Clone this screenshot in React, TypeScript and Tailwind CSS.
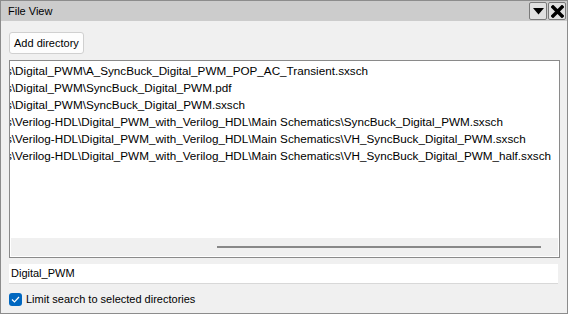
import React from "react";

const rows = [
  "s\\Digital_PWM\\A_SyncBuck_Digital_PWM_POP_AC_Transient.sxsch",
  "s\\Digital_PWM\\SyncBuck_Digital_PWM.pdf",
  "s\\Digital_PWM\\SyncBuck_Digital_PWM.sxsch",
  "s\\Verilog-HDL\\Digital_PWM_with_Verilog_HDL\\Main Schematics\\SyncBuck_Digital_PWM.sxsch",
  "s\\Verilog-HDL\\Digital_PWM_with_Verilog_HDL\\Main Schematics\\VH_SyncBuck_Digital_PWM.sxsch",
  "s\\Verilog-HDL\\Digital_PWM_with_Verilog_HDL\\Main Schematics\\VH_SyncBuck_Digital_PWM_half.sxsch",
];

export default function App() {
  return (
    <div
      className="w-[568px] h-[314px] bg-[#f0f0f0] border border-[#8c8c8c] flex flex-col text-[11px] text-black overflow-hidden"
      style={{ fontFamily: '"Liberation Sans", Arial, sans-serif' }}
    >
      {/* Title bar */}
      <div className="h-[20px] bg-[#cccccc] flex items-center pl-[7px] pr-[1px] shrink-0">
        <span className="flex-1 leading-none text-[11px]">File View</span>
        <div className="flex gap-[1px]">
          <div className="w-[18px] h-[18px] border border-[#7a7a7a] rounded-[2px] bg-[#e0e0e0] flex items-center justify-center">
            <svg width="11" height="7" viewBox="0 0 11 7">
              <polygon points="0,0 11,0 5.5,6.5" fill="#000" />
            </svg>
          </div>
          <div className="w-[18px] h-[18px] border border-[#7a7a7a] rounded-[2px] bg-[#e0e0e0] flex items-center justify-center">
            <svg width="13" height="13" viewBox="0 0 13 13">
              <path d="M2 2 L11 11 M11 2 L2 11" stroke="#000" strokeWidth="3.4" strokeLinecap="square" />
            </svg>
          </div>
        </div>
      </div>

      {/* Body */}
      <div className="flex-1 flex flex-col px-[8px] pt-[11px]">
        <div className="flex">
          <button className="h-[22px] px-[4px] border border-[#d0d0d0] rounded-[3px] bg-[#fdfdfd] text-[11px] leading-none">
            Add directory
          </button>
        </div>

        <div className="mt-[6px] w-[551px] h-[198px] border border-[#8a8a8a] bg-white flex flex-col overflow-hidden">
          <div className="flex-1 overflow-hidden pt-[1px]">
            <div className="ml-[-4px] text-[11.7px]">
              {rows.map((r) => (
                <div key={r} className="h-[17px] leading-[17px] whitespace-nowrap">
                  {r}
                </div>
              ))}
            </div>
          </div>
          <div className="h-[18px] bg-[#f0f0f0] flex items-center mx-[1px] mb-[1px]">
            <div className="ml-[206px] w-[324px] h-[2px] bg-[#888888]" />
          </div>
        </div>

        <div className="mt-[6px] w-[549px] h-[20px] bg-white border-b border-[#d8d8d8] flex items-center pl-[2px]">
          Digital_PWM
        </div>

        <div className="mt-[7px] flex items-center gap-[4px]">
          <div className="w-[13px] h-[13px] rounded-[3px] bg-[#0067c0] flex items-center justify-center">
            <svg width="9" height="7" viewBox="0 0 9 7">
              <path d="M1 3.5 L3.5 6 L8 1" stroke="#fff" strokeWidth="1.2" fill="none" />
            </svg>
          </div>
          <span>Limit search to selected directories</span>
        </div>
      </div>
    </div>
  );
}
